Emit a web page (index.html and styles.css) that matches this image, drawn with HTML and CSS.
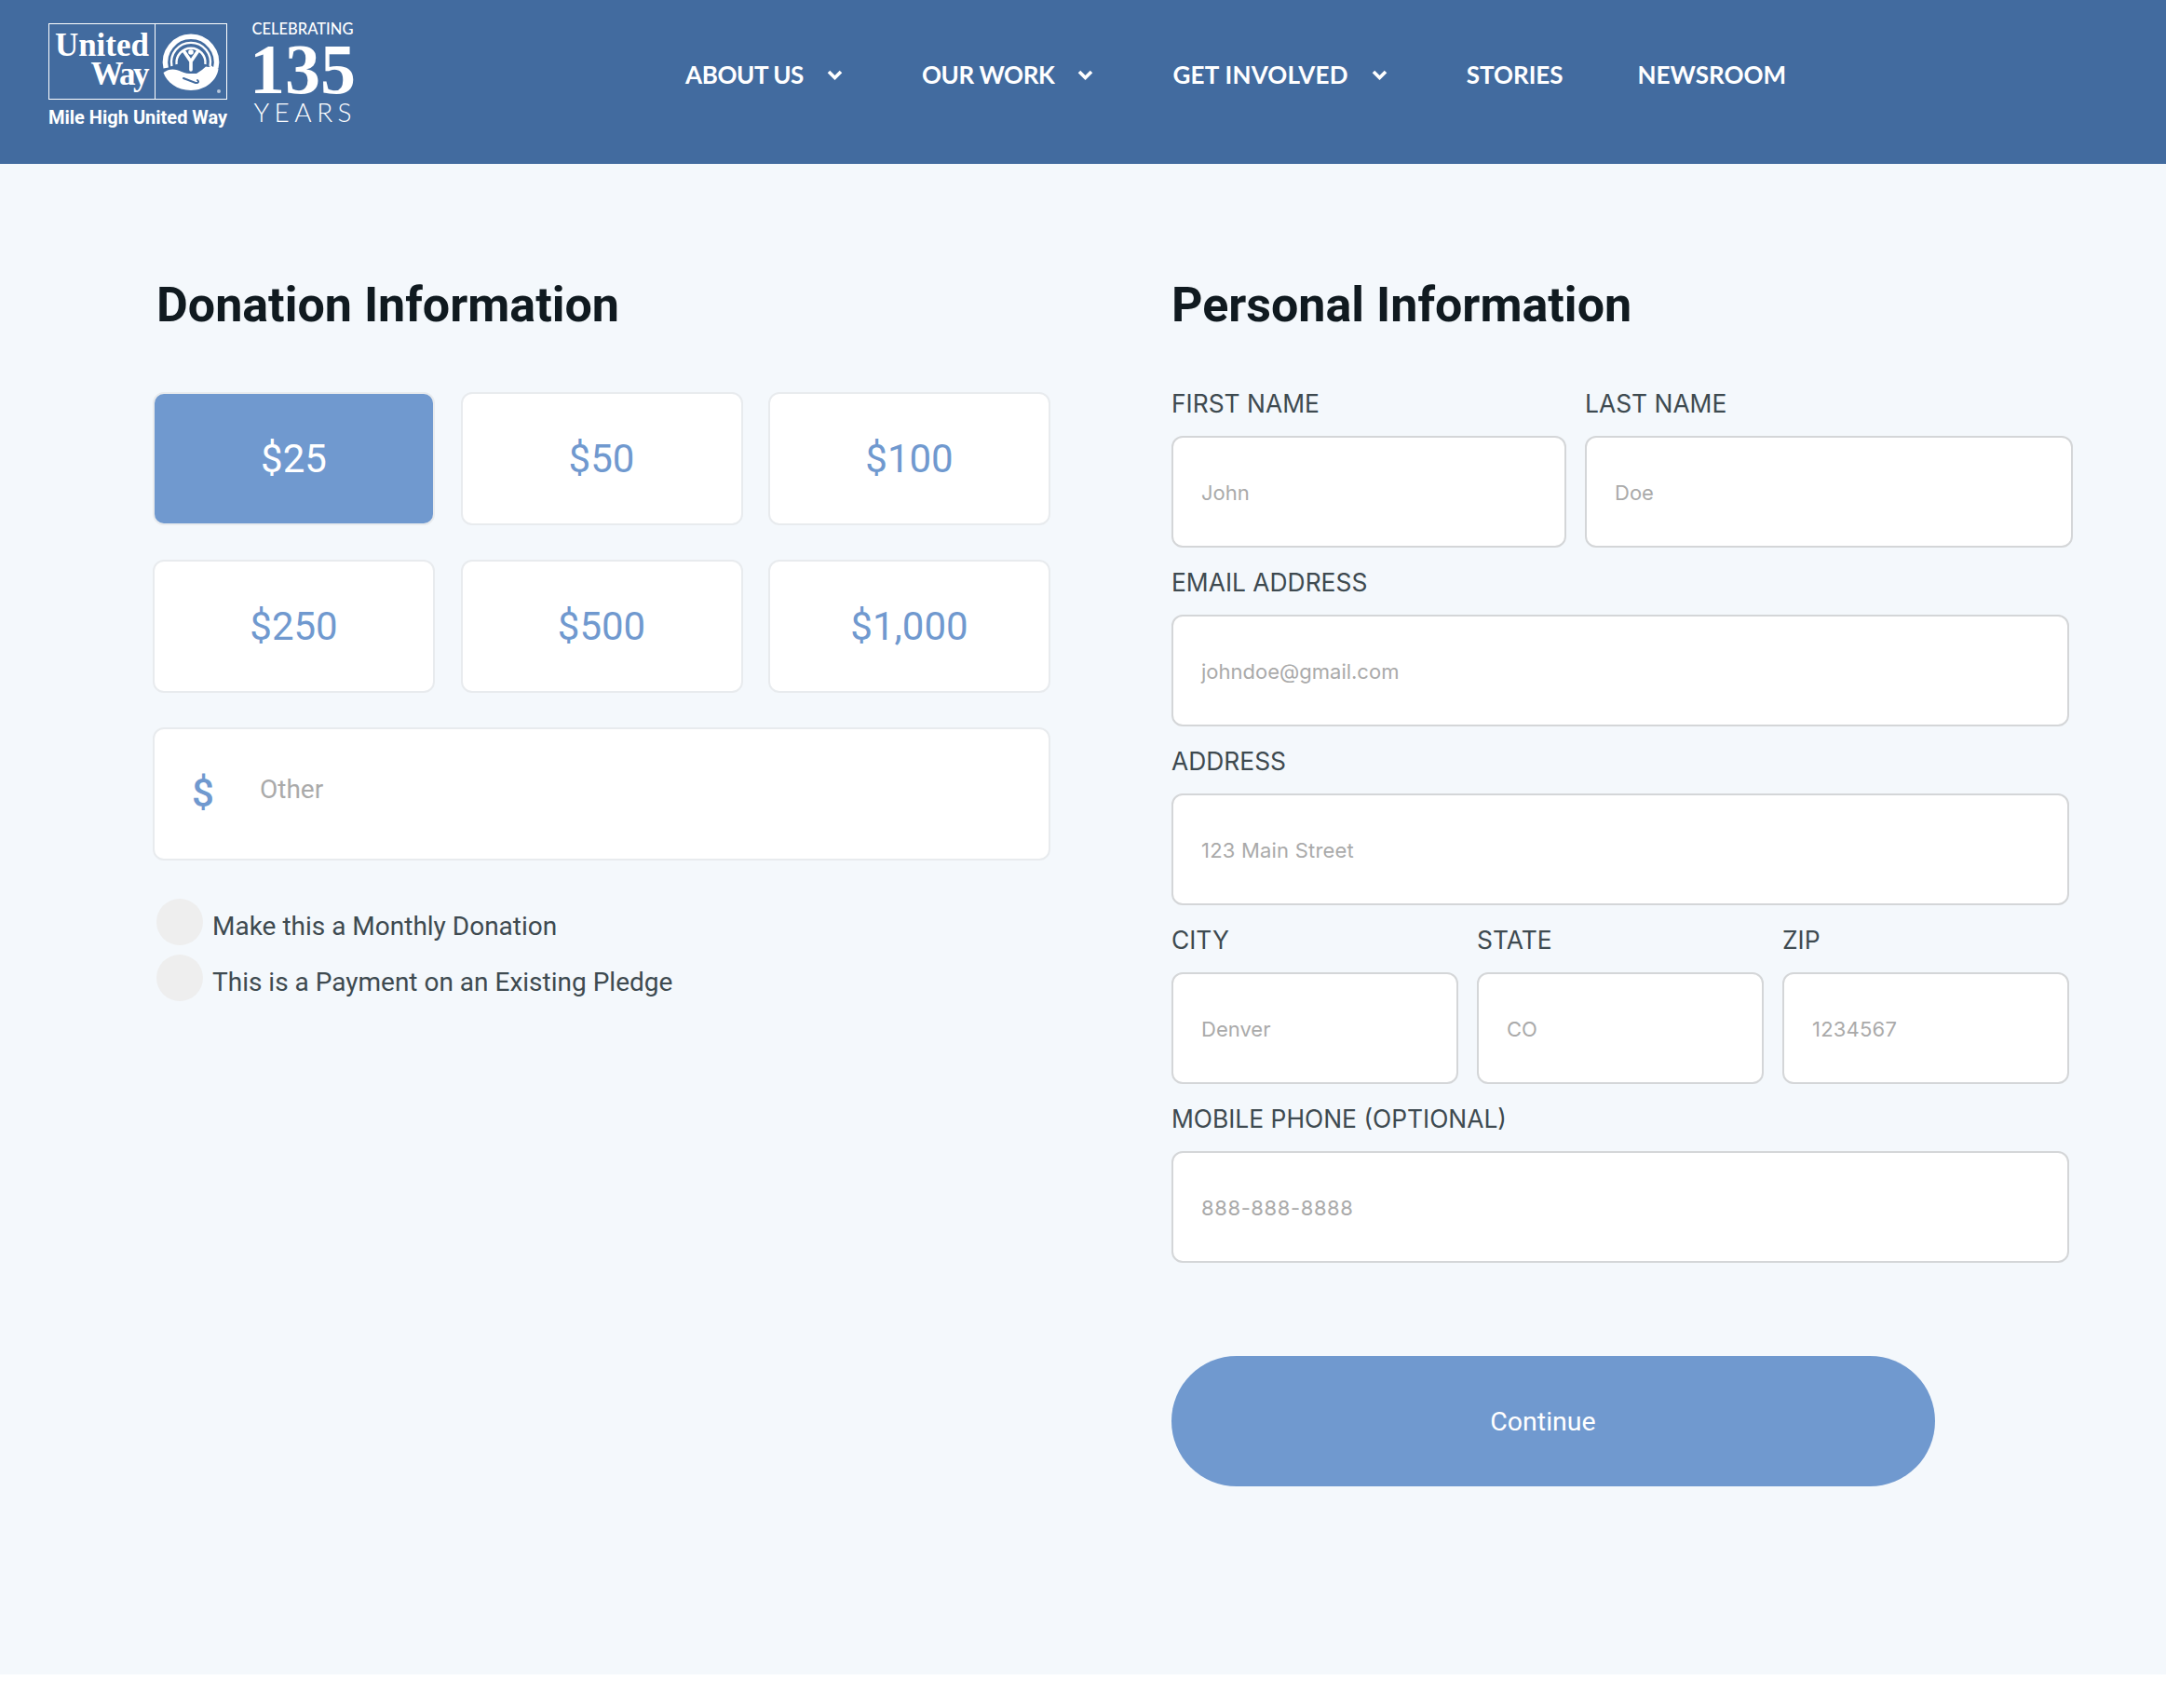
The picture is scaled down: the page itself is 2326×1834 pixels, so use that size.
FILE: index.html
```html
<!DOCTYPE html>
<html lang="en">
<head>
<meta charset="utf-8">
<title>Donate - Mile High United Way</title>
<link rel="stylesheet" href="styles.css">
</head>
<body>
<header class="site-header">
  <a class="brand" href="#">
    <div class="brand-main">
      <div class="uw-box">
        <div class="uw-word"><span>United</span><span>Way</span></div>
        <div class="uw-mark">
          <svg class="uw-emblem" viewBox="0 0 76 82" width="76" height="82" aria-hidden="true">
            <g fill="none" stroke="#fff">
              <path d="M11.200 48A27.500 27.500 0 1 1 64.800 48" stroke-width="5.500"/>
              <path d="M17.400 46A21 21 0 1 1 58.600 46" stroke-width="2.400"/>
              <path d="M22.600 44A15.500 15.500 0 1 1 53.400 44" stroke-width="2.400"/>
              <path d="M30.500 30L38 41L45.500 30M38 41V50" stroke-width="3.600" stroke-linecap="round" stroke-linejoin="round"/>
            </g>
            <circle cx="38" cy="31" r="2.800" fill="#fff"/>
            <path fill="#fff" d="M8.500 53C15 48 22 49 28 52C33 54.500 38 54 44 54L50 50L54 46.500L57 47L60 45.500L62 47L65 46.500L67.500 49C66 61 54 72 38 72C23 72 12 63 8.500 53Z"/>
            <path fill="none" stroke="#426b9f" stroke-width="2" stroke-linecap="round" d="M30 59L43 64C46 64.500 47 62.500 45 61"/>
            <circle cx="68" cy="73" r="2" fill="#b9c8dc"/>
          </svg>
        </div>
      </div>
      <div class="brand-name">Mile High United Way</div>
    </div>
    <div class="brand-anniv">
      <div class="anniv-top">CELEBRATING</div>
      <div class="anniv-num">135</div>
      <div class="anniv-bottom">YEARS</div>
    </div>
  </a>
  <nav class="main-nav">
    <a class="nav-item nav-tight" href="#">ABOUT US<svg class="chev" viewBox="0 0 17 11" aria-hidden="true"><path d="M2 2L8.500 8.500L15 2"/></svg></a>
    <a class="nav-item nav-tight" href="#">OUR WORK<svg class="chev" viewBox="0 0 17 11" aria-hidden="true"><path d="M2 2L8.500 8.500L15 2"/></svg></a>
    <a class="nav-item nav-wide" href="#">GET INVOLVED<svg class="chev" viewBox="0 0 17 11" aria-hidden="true"><path d="M2 2L8.500 8.500L15 2"/></svg></a>
    <a class="nav-item nav-plain" href="#">STORIES</a>
    <a class="nav-item" href="#">NEWSROOM</a>
  </nav>
</header>

<main class="content">
  <section class="col-donation">
    <h1 class="section-title">Donation Information</h1>
    <div class="amounts">
      <button class="amount is-active" type="button">$25</button>
      <button class="amount" type="button">$50</button>
      <button class="amount" type="button">$100</button>
      <button class="amount" type="button">$250</button>
      <button class="amount" type="button">$500</button>
      <button class="amount" type="button">$1,000</button>
    </div>
    <div class="other">
      <span class="other-sign">$</span>
      <span class="other-text">Other</span>
    </div>
    <div class="checks">
      <div class="check"><span class="check-dot"></span><span class="check-label">Make this a Monthly Donation</span></div>
      <div class="check"><span class="check-dot"></span><span class="check-label">This is a Payment on an Existing Pledge</span></div>
    </div>
  </section>

  <section class="col-personal">
    <h2 class="section-title">Personal Information</h2>
    <div class="fields">
      <div class="row row-names">
        <div class="field"><div class="label">FIRST NAME</div><div class="input">John</div></div>
        <div class="field"><div class="label">LAST NAME</div><div class="input">Doe</div></div>
      </div>
      <div class="field"><div class="label">EMAIL ADDRESS</div><div class="input">johndoe@gmail.com</div></div>
      <div class="field"><div class="label">ADDRESS</div><div class="input input-spaced">123 Main Street</div></div>
      <div class="row row-city">
        <div class="field"><div class="label">CITY</div><div class="input">Denver</div></div>
        <div class="field"><div class="label">STATE</div><div class="input">CO</div></div>
        <div class="field"><div class="label">ZIP</div><div class="input input-spaced">1234567</div></div>
      </div>
      <div class="field"><div class="label">MOBILE PHONE (OPTIONAL)</div><div class="input input-phone">888-888-8888</div></div>
    </div>
    <button class="continue" type="button">Continue</button>
  </section>
</main>
</body>
</html>
```

FILE: styles.css
```css
* { box-sizing: border-box; }
html, body { margin: 0; padding: 0; background: #fff; }
body { font-family: Roboto, "Liberation Sans", sans-serif; }
a { color: inherit; text-decoration: none; }

.site-header {
  height: 176px;
  background: #426b9f;
  color: #fff;
  display: flex;
  align-items: flex-start;
  padding-left: 52px;
}
.brand { display: flex; gap: 24px; padding-top: 25px; width: 684px; }
.brand-main { width: 192px; }
.uw-box {
  width: 192px;
  height: 82px;
  border: 1.5px solid #fff;
  display: flex;
}
.uw-word {
  width: 114px;
  border-right: 1.5px solid #fff;
  font-family: "Liberation Serif", serif;
  font-weight: 700;
  font-size: 35px;
  line-height: 31px;
  display: flex;
  flex-direction: column;
  align-items: flex-end;
  padding: 7px 6px 0 0;
}
.uw-word span:last-child { letter-spacing: -2.5px; padding-right: 2px; }
.uw-mark { flex: 1; display: flex; justify-content: center; }
.uw-emblem { display: block; margin-top: -1.5px; }
.brand-name {
  font-family: Roboto, sans-serif;
  font-weight: 700;
  font-size: 20px;
  line-height: 24px;
  margin-top: 7px;
  white-space: nowrap;
}
.brand-anniv { width: 114px; text-align: center; margin-top: -3px; }
.anniv-top { font-family: Lato, sans-serif; font-weight: 500; font-size: 16.5px; line-height: 18px; white-space: nowrap; }
.anniv-num {
  font-family: "Liberation Serif", serif;
  font-weight: 700;
  font-size: 76px;
  line-height: 64px;
  margin-top: 2px;
  white-space: nowrap;
}
.anniv-bottom { font-family: Lato, sans-serif; font-weight: 300; font-size: 28px; line-height: 30px; letter-spacing: 5.500px; margin-right: -5.500px; margin-top: -1px; }

.main-nav {
  display: flex;
  align-items: center;
  height: 160px;
  font-family: Lato, sans-serif;
  font-weight: 700;
  font-size: 26px;
}
.nav-item { display: flex; align-items: center; white-space: nowrap; margin-right: 85px; }
.nav-plain { margin-right: 80px; }
.nav-tight { letter-spacing: -0.4px; }
.nav-wide { letter-spacing: 0.25px; }
.chev { width: 17px; height: 11px; margin-left: 25px; fill: none; stroke: #fff; stroke-width: 3.6; }

.content {
  background: #f4f8fc;
  min-height: 1622px;
  padding: 120px 0 0 164px;
  display: grid;
  grid-template-columns: 964px 964px;
  column-gap: 130px;
  align-content: start;
}
.section-title {
  margin: 0;
  font-family: Roboto, sans-serif;
  font-weight: 700;
  font-size: 52px;
  line-height: 64px;
  color: #101a20;
}
.col-donation .section-title { margin: 0 0 61px 4px; }
.col-personal .section-title { margin-bottom: 55px; }

.amounts {
  display: grid;
  grid-template-columns: repeat(3, 303px);
  grid-auto-rows: 143px;
  column-gap: 27.5px;
  row-gap: 37px;
}
.amount {
  font-family: Roboto, sans-serif;
  font-size: 42px;
  color: #7099cf;
  background: #fff;
  border: 2px solid #e8ebee;
  border-radius: 12px;
  padding: 0;
}
.amount.is-active { background: #7099cf; color: #fff; }

.other {
  margin-top: 37px;
  height: 143px;
  background: #fff;
  border: 2px solid #e8ebee;
  border-radius: 12px;
  display: flex;
  align-items: center;
  padding-left: 40px;
}
.other-sign { width: 73px; font-family: Roboto, sans-serif; font-weight: 500; font-size: 42px; color: #7099cf; margin-top: -2px; }
.other-text { font-size: 28px; color: #aaa; margin-top: -11px; }

.checks { margin-top: 41px; padding-left: 4px; display: flex; flex-direction: column; gap: 10px; }
.check { display: flex; gap: 10px; height: 50px; }
.check-dot { width: 50px; height: 50px; border-radius: 50%; background: #eee; }
.check-label { font-size: 28px; line-height: 59px; color: #3e4a50; white-space: nowrap; }

.fields { display: flex; flex-direction: column; gap: 19px; }
.row { display: grid; column-gap: 20px; }
.row-names { grid-template-columns: 424px 524px; }
.row-city { grid-template-columns: repeat(3, 308px); column-gap: 20px; }
.label {
  font-family: Inter, sans-serif;
  font-size: 26.4px;
  line-height: 36px;
  color: #3e4a50;
  margin-bottom: 17px;
  white-space: nowrap;
}
.input {
  height: 120px;
  background: #fff;
  border: 2px solid #d4d6d8;
  border-radius: 12px;
  padding: 2px 30px 0;
  display: flex;
  align-items: center;
  font-family: Inter, sans-serif;
  font-size: 22px;
  color: #aaa;
}
.input-spaced { letter-spacing: 0.2px; }
.input-phone { letter-spacing: 0.6px; }
.continue {
  display: block;
  width: 820px;
  height: 140px;
  margin-top: 100px;
  background: #7099cf;
  color: #fff;
  border: 0;
  border-radius: 70px;
  padding: 0 22px 0 0;
  font-family: Roboto, sans-serif;
  font-weight: 400;
  font-size: 28.5px;
}
```
